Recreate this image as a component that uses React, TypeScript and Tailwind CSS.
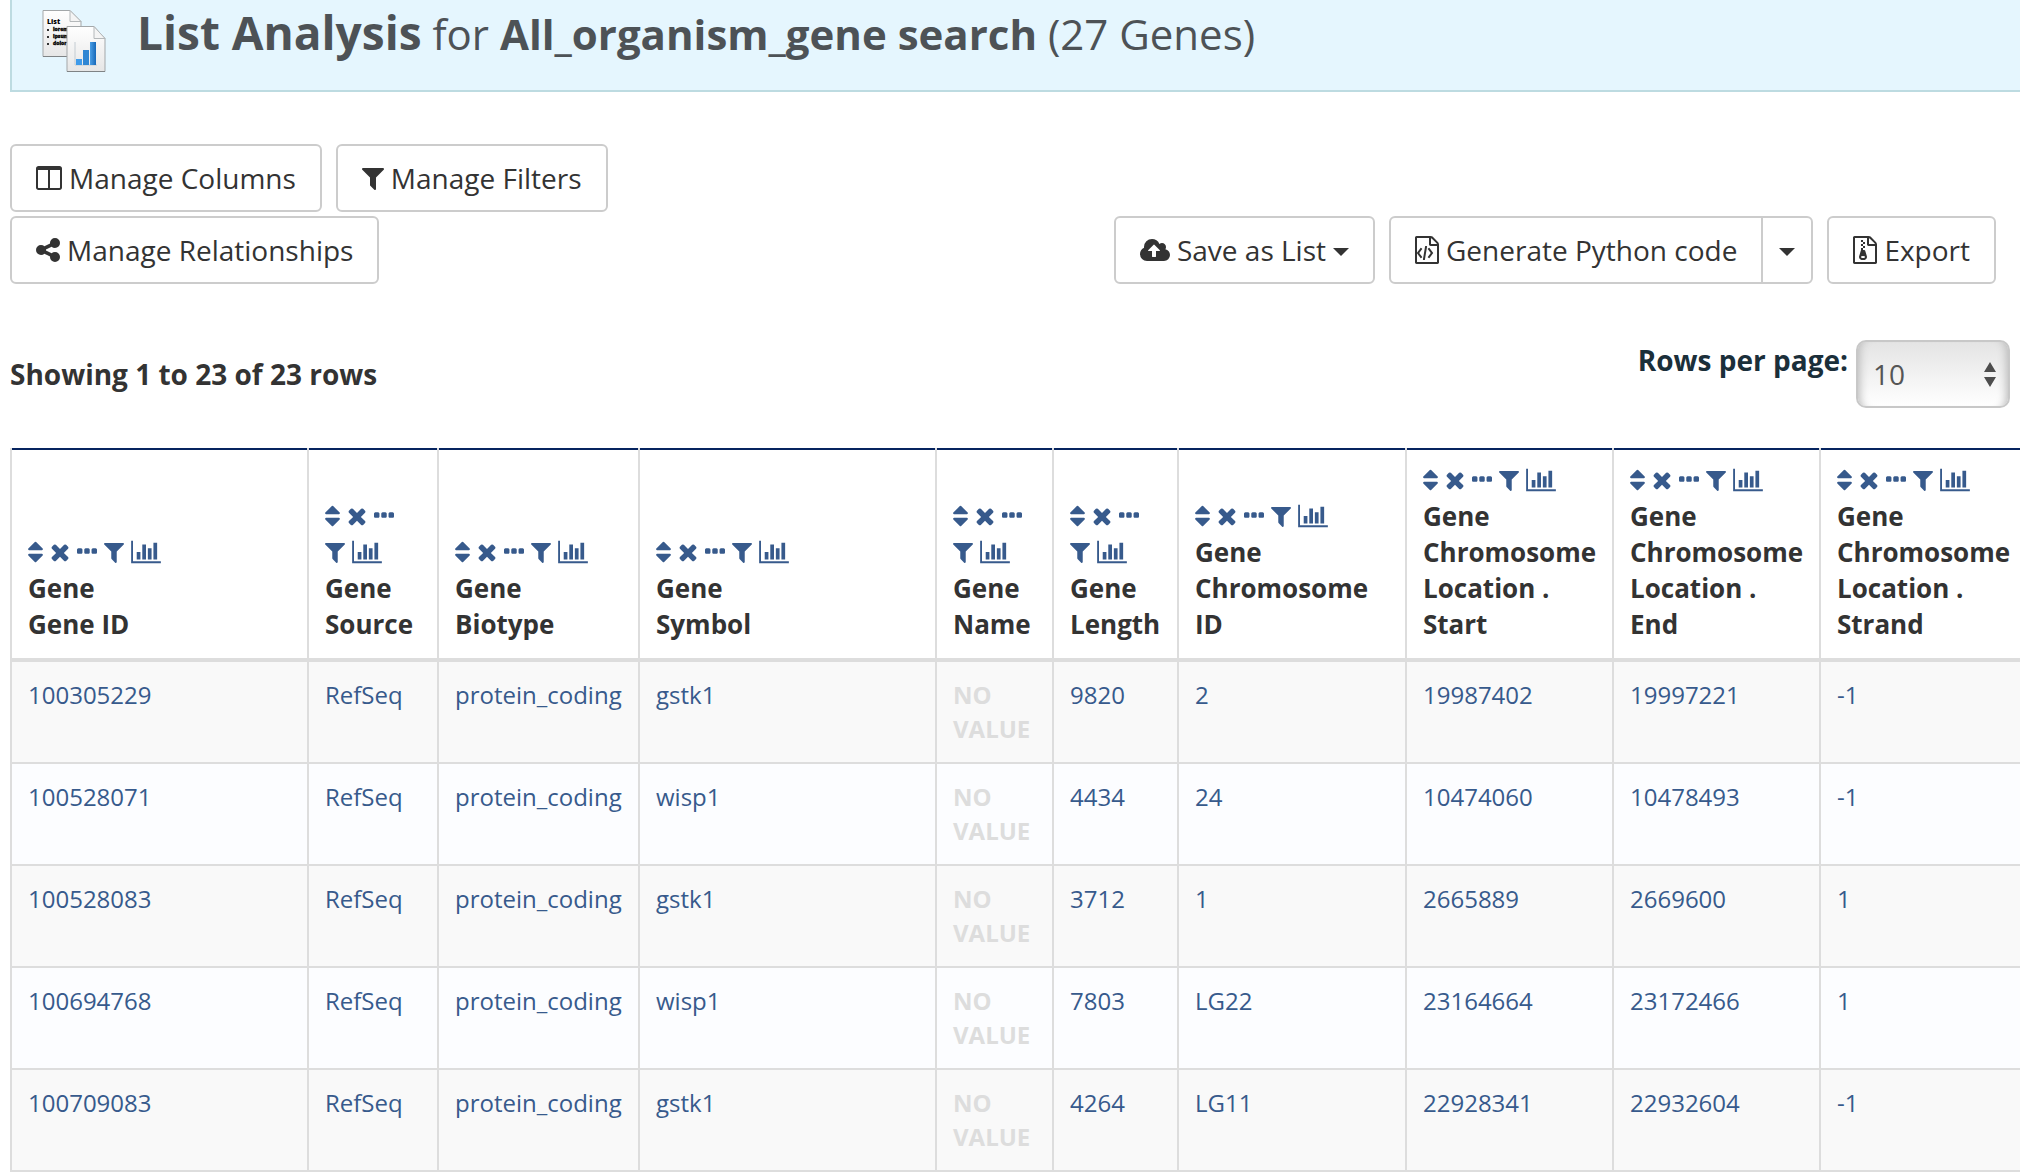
import React from "react";

type IconProps = { className?: string };

const PATHS = {
  columns:
    "M160 1536h608v-1152h-640v1120q0 13 9.5 22.5t22.5 9.5zm1376-32v-1120h-640v1152h608q13 0 22.5-9.5t9.5-22.5zm128-1216v1216q0 66-47 113t-113 47h-1344q-66 0-113-47t-47-113v-1216q0-66 47-113t113-47h1344q66 0 113 47t47 113z",
  filter:
    "M1595 295q17 41-14 70l-493 493v742q0 42-39 59-13 5-25 5-27 0-45-19l-256-256q-19-19-19-45v-486l-493-493q-31-29-14-70 17-39 59-39h1280q42 0 59 39z",
  share:
    "M1344 1024q133 0 226.5 93.5t93.5 226.5-93.5 226.5-226.5 93.5-226.5-93.5-93.5-226.5q0-12 2-34l-360-180q-92 86-218 86-133 0-226.5-93.5t-93.5-226.5 93.5-226.5 226.5-93.5q126 0 218 86l360-180q-2-22-2-34 0-133 93.5-226.5t226.5-93.5 226.5 93.5 93.5 226.5-93.5 226.5-226.5 93.5q-126 0-218-86l-360 180q2 22 2 34t-2 34l360 180q92-86 218-86z",
  cloud:
    "M1280 928q0-14-9-23l-352-352q-9-9-23-9t-23 9l-351 351q-10 12-10 24 0 14 9 23t23 9h224v352q0 13 9.5 22.5t22.5 9.5h192q13 0 22.5-9.5t9.5-22.5v-352h224q13 0 22.5-9.5t9.5-22.5zm640 288q0 159-112.5 271.5t-271.5 112.5h-1088q-185 0-316.5-131.5t-131.5-316.5q0-130 70-240t188-165q-2-30-2-43 0-212 150-362t362-150q156 0 285.5 87t188.5 231q71-62 166-62 106 0 181 75t75 181q0 76-41 138 130 31 213.5 135.5t83.5 238.5z",
  file: "M1596 380q28 28 48 76t20 88v1152q0 40-28 68t-68 28h-1344q-40 0-68-28t-28-68v-1600q0-40 28-68t68-28h896q40 0 88 20t76 48zm-444-244v376h376q-10-29-22-41l-313-313q-12-12-41-22zm384 1528v-1024h-416q-40 0-68-28t-28-68v-416h-768v1536h1280z",
  code: "M480 768q8-11 21-12.5t24 6.5l51 38q11 8 12.5 21t-6.5 24l-182 243 182 243q8 11 6.5 24t-12.5 21l-51 38q-11 8-24 6.5t-21-12.5l-226-301q-14-19 0-38zm802 301q14 19 0 38l-226 301q-8 11-21 12.5t-24-6.5l-51-38q-11-8-12.5-21t6.5-24l182-243-182-243q-8-11-6.5-24t12.5-21l51-38q11-8 24-6.5t21 12.5zm-620 461q-13-2-20.5-13t-5.5-24l138-831q2-13 13-20.5t24-5.5l63 10q13 2 20.5 13t5.5 24l-138 831q-2 13-13 20.5t-24 5.5z",
  zip: "M768 384v-128h-128v128h128zm128 128v-128h-128v128h128zm-128 128v-128h-128v128h128zm128 128v-128h-128v128h128zM909 943l107 349q8 27 8 52 0 83-72.5 137.5t-183.5 54.5-183.5-54.5-72.5-137.5q0-25 8-52 21-63 120-396v-128h128v128h79q22 0 39 13t23 34zm-141 465q53 0 90.5-19t37.5-45-37.5-45-90.5-19-90.5 19-37.5 45 37.5 45 90.5 19z",
  sort: "M1408 1088q0 26-19 45l-448 448q-19 19-45 19t-45-19l-448-448q-19-19-19-45t19-45 45-19h896q26 0 45 19t19 45zm0-384q0 26-19 45t-45 19h-896q-26 0-45-19t-19-45 19-45l448-448q19-19 45-19t45 19l448 448q19 19 19 45z",
  times:
    "M1490 1322q0 40-28 68l-136 136q-28 28-68 28t-68-28l-294-294-294 294q-28 28-68 28t-68-28l-136-136q-28-28-28-68t28-68l294-294-294-294q-28-28-28-68t28-68l136-136q28-28 68-28t68 28l294 294 294-294q28-28 68-28t68 28l136 136q28 28 28 68t-28 68l-294 294 294 294q28 28 28 68z",
  dots: "M576 736v192q0 40-28 68t-68 28h-192q-40 0-68-28t-28-68v-192q0-40 28-68t68-28h192q40 0 68 28t28 68zm512 0v192q0 40-28 68t-68 28h-192q-40 0-68-28t-28-68v-192q0-40 28-68t68-28h192q40 0 68 28t28 68zm512 0v192q0 40-28 68t-68 28h-192q-40 0-68-28t-28-68v-192q0-40 28-68t68-28h192q40 0 68 28t28 68z",
  chart:
    "M640 896v512h-256v-512h256zm384-512v1024h-256v-1024h256zm1024 1152v128h-2048v-1536h128v1408h1920zm-640-896v768h-256v-768h256zm384-384v1152h-256v-1152h256z",
};

function Icon({ viewBox, d, className = "" }: { viewBox: string; d: string; className?: string }) {
  return (
    <svg viewBox={viewBox} className={`shrink-0 ${className}`} fill="currentColor" aria-hidden="true">
      <path d={d} />
    </svg>
  );
}

function Caret({ className = "" }: IconProps) {
  return (
    <svg viewBox="0 0 16 8" className={`h-2 w-4 shrink-0 ${className}`} fill="currentColor" aria-hidden="true">
      <path d="M0 0h16L8 8z" />
    </svg>
  );
}

function ListAnalysisLogo() {
  return (
    <svg viewBox="0 0 64 64" className="h-16 w-16 shrink-0" aria-hidden="true">
      <defs>
        <linearGradient id="paper" x1="0" y1="0" x2="0" y2="1">
          <stop offset="0" stopColor="#ffffff" />
          <stop offset="1" stopColor="#e6e6e6" />
        </linearGradient>
        <linearGradient id="bar" x1="0" y1="0" x2="1" y2="0">
          <stop offset="0" stopColor="#4a9ee6" />
          <stop offset="1" stopColor="#1768b8" />
        </linearGradient>
      </defs>
      <path d="M1 1.500h27l11 11v35H1z" fill="url(#paper)" stroke="#a3a7a9" />
      <path d="M1 47.500h37" stroke="#7f8385" />
      <path d="M28 1.500v11h11z" fill="#f4f4f4" stroke="#b4b8ba" />
      <text x="5" y="15" fontFamily="Open Sans, sans-serif" fontSize="7" fontWeight="800" fill="#000">List</text>
      <g fontFamily="Open Sans, sans-serif" fontSize="5" fontWeight="800" fill="#000" stroke="#000" strokeWidth="0.3">
        <text x="11" y="22">lorem</text>
        <text x="11" y="29">ipsum</text>
        <text x="11" y="36">dolor</text>
      </g>
      <path d="M5 20h2v2H5zM5 27h2v2H5zM5 34h2v2H5z" fill="#333" />
      <path d="M25 17.500h27l11 12v33H25z" fill="url(#paper)" stroke="#a3a7a9" />
      <path d="M25 62.500h38" stroke="#7f8385" />
      <path d="M52 17.500v12h11z" fill="#f4f4f4" stroke="#b4b8ba" />
      <path d="M33 33v23h22" fill="none" stroke="#c4ccd2" />
      <path d="M34 50h6v6h-6z" fill="#3f9bea" />
      <path d="M41 41h6v15h-6z" fill="#2f86d3" />
      <path d="M48 33h6v23h-6z" fill="url(#bar)" />
    </svg>
  );
}

const buttonBase =
  "flex items-center border-2 border-[#ccc] bg-white py-3 text-[28px] leading-10 text-[#333] whitespace-nowrap cursor-pointer";

function ToolButton({ children, className = "rounded-md" }: { children: React.ReactNode; className?: string }) {
  return (
    <button type="button" className={`${buttonBase} gap-[7px] px-6 ${className}`}>
      {children}
    </button>
  );
}

const columns: { width: string; lines: string[] }[] = [
  { width: "w-[299px]", lines: ["Gene", "Gene ID"] },
  { width: "w-[130px]", lines: ["Gene", "Source"] },
  { width: "w-[201px]", lines: ["Gene", "Biotype"] },
  { width: "w-[297px]", lines: ["Gene", "Symbol"] },
  { width: "w-[117px]", lines: ["Gene", "Name"] },
  { width: "w-[125px]", lines: ["Gene", "Length"] },
  { width: "w-[228px]", lines: ["Gene", "Chromosome", "ID"] },
  { width: "w-[207px]", lines: ["Gene", "Chromosome", "Location .", "Start"] },
  { width: "w-[207px]", lines: ["Gene", "Chromosome", "Location .", "End"] },
  { width: "w-[207px]", lines: ["Gene", "Chromosome", "Location .", "Strand"] },
];

const rows: (string | null)[][] = [
  ["100305229", "RefSeq", "protein_coding", "gstk1", null, "9820", "2", "19987402", "19997221", "-1"],
  ["100528071", "RefSeq", "protein_coding", "wisp1", null, "4434", "24", "10474060", "10478493", "-1"],
  ["100528083", "RefSeq", "protein_coding", "gstk1", null, "3712", "1", "2665889", "2669600", "1"],
  ["100694768", "RefSeq", "protein_coding", "wisp1", null, "7803", "LG22", "23164664", "23172466", "1"],
  ["100709083", "RefSeq", "protein_coding", "gstk1", null, "4264", "LG11", "22928341", "22932604", "-1"],
];

const columnActions = [
  { label: "Sort", viewBox: "384 0 1024 1792", d: PATHS.sort, size: "w-[15px]" },
  { label: "Remove", viewBox: "192 0 1408 1792", d: PATHS.times, size: "w-5" },
  { label: "Toggle", viewBox: "192 0 1408 1792", d: PATHS.dots, size: "w-5" },
  { label: "Filter", viewBox: "192 0 1408 1792", d: PATHS.filter, size: "w-5" },
  { label: "Summary", viewBox: "0 0 2048 1792", d: PATHS.chart, size: "w-[30px]" },
];

function ColumnActions({ name }: { name: string }) {
  return (
    <div className="flex flex-wrap gap-x-[7px] pr-1 text-[#375a8c]">
      {columnActions.map((a) => (
        <button key={a.label} type="button" aria-label={`${a.label} ${name}`} className="flex h-9 cursor-pointer items-center">
          <Icon viewBox={a.viewBox} d={a.d} className={`h-[26px] ${a.size}`} />
        </button>
      ))}
    </div>
  );
}

export default function App() {
  return (
    <div className="overflow-hidden bg-white pl-[10px] font-['Open_Sans','Noto_Sans',sans-serif] text-[#333]">
      <header className="flex h-[92px] items-start gap-[31px] border-b-2 border-l-2 border-[#bddbe1] bg-[#e5f6fe] pt-[9px] pl-[30px]">
        <ListAnalysisLogo />
        <h1 className="text-[42px] leading-[46px] whitespace-nowrap text-[#4d5256]">
          <strong className="text-[46px] font-bold">List Analysis</strong> for <strong className="font-bold">All_organism_gene search</strong> (27 Genes)
        </h1>
      </header>

      <div className="mt-[52px] flex items-end justify-between pr-6">
        <div className="flex max-w-[640px] flex-wrap gap-x-[14px] gap-y-1">
          <ToolButton>
            <Icon viewBox="0 0 1664 1792" d={PATHS.columns} className="h-7 w-[26px]" />
            Manage Columns
          </ToolButton>
          <ToolButton>
            <Icon viewBox="192 0 1408 1792" d={PATHS.filter} className="h-7 w-[22px]" />
            Manage Filters
          </ToolButton>
          <ToolButton>
            <Icon viewBox="128 0 1536 1792" d={PATHS.share} className="h-7 w-6" />
            Manage Relationships
          </ToolButton>
        </div>
        <div className="flex gap-[14px]">
          <ToolButton>
            <Icon viewBox="0 0 1920 1792" d={PATHS.cloud} className="h-7 w-[30px]" />
            Save as List
            <Caret className="mt-1" />
          </ToolButton>
          <div className="flex">
            <ToolButton className="rounded-l-md">
              <Icon viewBox="128 0 1536 1792" d={PATHS.file + PATHS.code} className="h-7 w-6" />
              Generate Python code
            </ToolButton>
            <button type="button" aria-label="Choose code language" className={`${buttonBase} -ml-0.5 rounded-r-md px-4`}>
              <Caret className="mt-1" />
            </button>
          </div>
          <ToolButton>
            <Icon viewBox="128 0 1536 1792" d={PATHS.file + PATHS.zip} className="h-7 w-6" />
            Export
          </ToolButton>
        </div>
      </div>

      <div className="mt-14 flex items-center justify-between pr-[10px]">
        <p className="text-[28px] leading-10 font-bold">Showing 1 to 23 of 23 rows</p>
        <div className="flex items-start gap-2">
          <label htmlFor="rows-per-page" className="text-[28px] leading-10 font-bold text-[#1b2f3a]">
            Rows per page:
          </label>
          <div className="relative">
            <select
              id="rows-per-page"
              defaultValue="10"
              className="h-[68px] w-[154px] appearance-none rounded-[10px] border-2 border-[#c8c8c8] bg-linear-to-b from-[#e4e4e4] to-white pl-[15px] text-[28px] text-[#555] shadow-[inset_10px_0_8px_-8px_#bbb,inset_-10px_0_8px_-8px_#bbb]"
            >
              <option>10</option>
              <option>25</option>
              <option>50</option>
              <option>100</option>
            </select>
            <svg viewBox="0 0 12 25" className="pointer-events-none absolute top-[22px] right-[14px] h-[25px] w-3" fill="#4d4d4d" aria-hidden="true">
              <path d="M0 10L6 0l6 10zM0 15h12L6 25z" />
            </svg>
          </div>
        </div>
      </div>

      <table className="mt-10 w-full min-w-[2018px] table-fixed border-separate border-spacing-0 text-left">
        <thead>
          <tr>
            {columns.map((c, i) => (
              <th
                key={i}
                scope="col"
                className={`${c.width} border-r-2 border-b-4 border-[#ddd] px-4 pt-[14px] pb-4 align-bottom text-[26px] leading-9 font-bold whitespace-nowrap shadow-[inset_0_2px_#06245f] first:border-l-2`}
              >
                <ColumnActions name={c.lines.join(" ")} />
                {c.lines.map((line) => (
                  <div key={line}>{line}</div>
                ))}
              </th>
            ))}
          </tr>
        </thead>
        <tbody>
          {rows.map((row) => (
            <tr key={row[0]} className="odd:bg-[#f9f9f9] even:bg-[#fcfdff]">
              {row.map((cell, i) => (
                <td key={i} className="border-r-2 border-b-2 border-[#ddd] p-4 align-top text-2xl/[34px] first:border-l-2">
                  {cell === null ? (
                    <span className="font-bold text-[#ddd]">NO VALUE</span>
                  ) : (
                    <a href="#" className="text-[#375a8c]">
                      {cell}
                    </a>
                  )}
                </td>
              ))}
            </tr>
          ))}
        </tbody>
      </table>
    </div>
  );
}
